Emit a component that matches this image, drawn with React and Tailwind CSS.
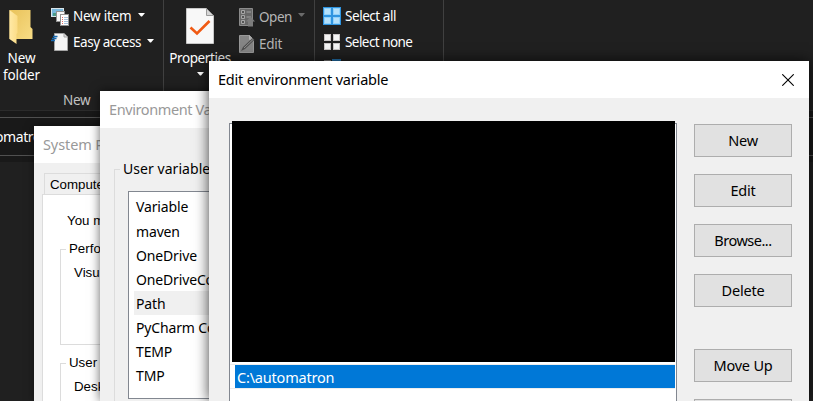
import React from "react";

const UI = "font-['Noto_Sans','Open_Sans',sans-serif]";

function Caret({ className = "" }) {
  return (
    <svg className={`shrink-0 ${className}`} width="7" height="4" viewBox="0 0 7 4" fill="currentColor">
      <path d="M0 0H7L4 3.4H3Z" />
    </svg>
  );
}

function FolderIcon() {
  return (
    <svg width="26" height="36" viewBox="0 0 26 36">
      <defs>
        <linearGradient id="folderBack" x1="0" x2="1" y1="0" y2="1">
          <stop offset="0" stopColor="#e9c25a" />
          <stop offset="1" stopColor="#f7dc85" />
        </linearGradient>
        <linearGradient id="folderFront" x1="0" x2="1">
          <stop offset="0" stopColor="#ffe9a6" />
          <stop offset="1" stopColor="#fbdc86" />
        </linearGradient>
      </defs>
      <path d="M0.500 1H21.500V18L23.500 20V30H0.500Z" fill="url(#folderBack)" />
      <path d="M0.500 1L8.500 7V24L7.500 25V35L0.500 30Z" fill="url(#folderFront)" />
    </svg>
  );
}

function NewItemIcon() {
  return (
    <svg width="19" height="18" viewBox="0 0 19 18" shapeRendering="crispEdges">
      <rect x="0.5" y="0.5" width="12" height="8" fill="#78b7dc" stroke="#d9e5ea" />
      <rect x="2" y="5" width="5" height="3" fill="#4c9a86" />
      <rect x="5.5" y="3.5" width="8" height="10" fill="#f7f7f7" stroke="#929292" />
      <rect x="9.5" y="6.5" width="8" height="11" fill="#fff" stroke="#929292" />
      <path d="M11 9.5H12M11 11.5H12M11 13.5H12M11 15.5H12" stroke="#e06b63" />
      <path d="M13 9.5H17M13 11.5H17M13 13.5H17M13 15.5H17" stroke="#a9c4dc" />
    </svg>
  );
}

function EasyAccessIcon() {
  return (
    <svg width="19" height="19" viewBox="0 0 19 19">
      <path d="M3.500 .5H13L16.500 4V17.500H3.500Z" fill="#f5f5f5" stroke="#a5a5a5" />
      <path d="M13 .5V4H16.500" fill="#ddd" stroke="#a5a5a5" />
      <path d="M2 3.500H6.500M1 5.500H5.500M0 7.500H4" stroke="#1769b0" strokeWidth="1.300" />
    </svg>
  );
}

function PropertiesIcon() {
  return (
    <svg width="28" height="36" viewBox="0 0 28 36">
      <path d="M.5 .5H20.500L27.500 7.500V35.500H.5Z" fill="#f8f8f8" stroke="#c8c8c8" />
      <path d="M20.500 .5V7.500H27.500Z" fill="#d6d6d6" stroke="#999" />
      <path d="M4.500 19.500L11 25.500L23.500 13" fill="none" stroke="#f05a14" strokeWidth="2.600" />
    </svg>
  );
}

function OpenIcon() {
  return (
    <svg width="16" height="19" viewBox="0 0 16 19">
      <path d="M.5 .5H13.500V17.500H.5Z" fill="#686868" stroke="#8b8b8b" />
      <path d="M2.500 2.500H5.500V5.500H2.500ZM2.500 7.500H5.500V10.500H2.500ZM2.500 12.500H5.500V15.500H2.500Z" fill="#555" stroke="#a6a6a6" />
      <path d="M7.500 4H12M7.500 9H12" stroke="#a0a0a0" />
      <path d="M11.500 8.500L16 13.500H14V18.500H9V13.500H7Z" fill="#7c7c7c" />
    </svg>
  );
}

function EditIcon() {
  return (
    <svg width="16" height="18" viewBox="0 0 16 18">
      <path d="M.5 .5H10.500L14.500 4.500V17.500H.5Z" fill="#858585" stroke="#989898" />
      <path d="M10.500 .5V4.500H14.500" fill="#aaa" stroke="#b3b3b3" />
      <path d="M2 16L4 12L13.500 3L15.500 5L6 14Z" fill="#4e4e4e" />
      <path d="M5 13L14 4.500" stroke="#929292" />
    </svg>
  );
}

function TilesIcon({ all }) {
  return (
    <svg width="18" height="18" viewBox="0 0 18 18" shapeRendering="crispEdges">
      {all && <rect width="18" height="18" fill="#2f94e0" />}
      {[1, 10].map((x) =>
        [1, 10].map((y) => (
          <rect key={`${x}-${y}`} x={x + 0.5} y={y + 0.5} width="6" height="6"
            fill={all ? "#b3e0fb" : "#f5f5f5"} stroke={all ? "#8fd0fa" : "#c9c5c5"} />
        ))
      )}
    </svg>
  );
}

function InvertSelectionIcon() {
  return (
    <svg width="18" height="18" viewBox="0 0 18 18" shapeRendering="crispEdges">
      <path d="M1 1H8V8H1ZM10 10H17V17H10Z" fill="#7d7d7d" />
      <path d="M9 0H18V9H9ZM0 9H9V18H0Z" fill="#2577b5" />
    </svg>
  );
}

function Ribbon() {
  return (
    <div className="flex h-[111px] border-b border-[#2b2b2b] bg-[#202020] text-[13.5px] leading-[17px] text-white">
      <div className="flex h-full w-[164px] shrink-0 flex-col border-r border-[#404040]">
        <div className="flex h-[92px]">
          <div className="flex w-[43px] flex-col items-center pt-[9px] text-center">
            <FolderIcon />
            <span className="mt-[5px] tracking-[-0.1px]">New<br />folder</span>
          </div>
          <div className="flex flex-col gap-[7px] pl-2 pt-[7px]">
            <div className="flex h-[19px] items-center">
              <NewItemIcon />
              <span className="ml-[3px] tracking-[-0.25px]">New item</span>
              <Caret className="ml-[7px] -mt-1" />
            </div>
            <div className="flex h-[19px] items-center">
              <EasyAccessIcon />
              <span className="ml-[3px] tracking-[-0.45px]">Easy access</span>
              <Caret className="ml-[6px] -mt-1" />
            </div>
          </div>
        </div>
        <span className="pl-[63px] tracking-[-0.3px] text-[#c3c3c3]">New</span>
      </div>
      <div className="flex w-[151px] shrink-0 border-r border-[#404040]">
        <div className="flex w-[72px] flex-col items-center pt-[8px]">
          <PropertiesIcon />
          <span className="mt-[6px] tracking-[-0.4px]">Properties</span>
          <Caret className="mt-[5px]" />
        </div>
        <div className="flex flex-col gap-[9px] pl-[3px] pt-[8px] text-[#b5b5b5]">
          <div className="flex h-[18px] items-center">
            <OpenIcon />
            <span className="ml-1 tracking-[-0.45px]">Open</span>
            <Caret className="ml-[6px] -mt-1 text-[#6b6b6b]" />
          </div>
          <div className="flex h-[18px] items-center">
            <EditIcon />
            <span className="ml-1 tracking-[-0.3px]">Edit</span>
          </div>
        </div>
      </div>
      <div className="flex w-[129px] shrink-0 flex-col gap-2 border-r border-[#404040] pl-2 pt-[7px]">
        <div className="flex h-[18px] items-center gap-1">
          <TilesIcon all />
          <span className="tracking-[-0.45px]">Select all</span>
        </div>
        <div className="flex h-[18px] items-center gap-1">
          <TilesIcon />
          <span className="tracking-[-0.55px]">Select none</span>
        </div>
        <div className="flex h-[18px] items-center">
          <InvertSelectionIcon />
        </div>
      </div>
    </div>
  );
}

function Explorer() {
  return (
    <div className="h-full bg-[#202020]">
      <Ribbon />
      <div className="h-[51px] bg-[#191919] pt-[6px]">
        <div className="flex h-[39px] items-center overflow-hidden border-y border-[#505050] text-[14px] text-white">
          <span className="-ml-[5px] tracking-[-0.4px]">omatron</span>
        </div>
      </div>
    </div>
  );
}

function GroupBox({ title, className, children }) {
  return (
    <fieldset className={`border border-r-0 border-[#dcdcdc] ${className}`}>
      <legend className="ml-[5px] px-[3px] leading-[16px]">{title}</legend>
      {children}
    </fieldset>
  );
}

function SystemProperties() {
  return (
    <section className="absolute left-[34px] top-[126px] flex h-[275px] w-[300px] flex-col overflow-hidden bg-[#f0f0f0] font-['Liberation_Sans',Arial,sans-serif] text-[13.3px] text-black shadow-[0_0_8px_rgba(0,0,0,0.5)]">
      <header className={`flex h-[37px] shrink-0 items-center bg-white pl-[9px] text-[14.5px] tracking-[-0.1px] text-[#999] ${UI}`}>
        System Properties
      </header>
      <div className="ml-[10px] mt-[10px] flex h-[21px] w-[120px] items-center border border-b-0 border-[#dcdcdc] pl-[5px] pt-[2px]">
        Computer
      </div>
      <div className="ml-2 flex grow flex-col border-l border-t border-[#dcdcdc] bg-white pl-[17px]">
        <p className="mt-[18px] whitespace-nowrap pl-[7px] leading-[16px]">You must</p>
        <GroupBox title="Performance" className="mt-[12px] h-[104px] shrink-0">
          <p className="mt-[8px] pl-[13px] leading-[16px]">Visual</p>
        </GroupBox>
        <GroupBox title="User Profiles" className="mt-[10px] h-[80px] shrink-0">
          <p className="mt-[8px] pl-[13px] leading-[16px]">Desktop</p>
        </GroupBox>
      </div>
    </section>
  );
}

const VARIABLES = ["maven", "OneDrive", "OneDriveCommercial", "Path", "PyCharm Community", "TEMP", "TMP"];

function EnvironmentVariables() {
  return (
    <section className="absolute left-[100px] top-[91px] flex h-[310px] w-[400px] flex-col overflow-hidden bg-[#f0f0f0] text-[14px] tracking-[-0.15px] text-black shadow-[0_0_10px_rgba(0,0,0,0.6)]">
      <header className="flex h-[37px] shrink-0 items-center bg-white pl-[9px] text-[14.5px] tracking-[-0.4px] text-[#999]">
        Environment Variables
      </header>
      <fieldset className="ml-[14px] mt-[31px] h-[260px] shrink-0 border border-[#dcdcdc]">
        <legend className="ml-[5px] px-[3px] leading-[20px] tracking-[0.05px]">User variables</legend>
        <div className="ml-[13px] mt-[12px] h-[208px] border border-[#828790] bg-white pl-[5px]">
          <div className="flex h-[27px] items-center pl-[2px] pt-[1px]">Variable</div>
          {VARIABLES.map((name) => (
            <div key={name} className={`flex h-6 items-center pl-[2px] ${name === "Path" ? "bg-[#f0f0f0]" : ""}`}>
              {name}
            </div>
          ))}
        </div>
      </fieldset>
    </section>
  );
}

function DialogButton({ children, className = "" }) {
  return (
    <button className={`flex h-[33px] w-[98px] shrink-0 items-center justify-center border border-[#adadad] bg-[#e1e1e1] ${className}`}>
      {children}
    </button>
  );
}

function EditVariable() {
  return (
    <section className="absolute left-[209px] top-[61px] flex h-[340px] w-[600px] flex-col overflow-hidden bg-[#f0f0f0] text-[14.5px] tracking-[-0.2px] text-black shadow-[0_0_13px_rgba(0,0,0,0.75)]">
      <header className="flex h-[37px] shrink-0 items-center justify-between bg-white pl-[9px] pr-[15px]">
        <span>Edit environment variable</span>
        <svg width="12" height="12" viewBox="0 0 12 12" stroke="#000" strokeWidth="1.1">
          <path d="M.3 .3L11.700 11.700M11.700 .3L.3 11.700" />
        </svg>
      </header>
      <div className="flex pl-5 pt-[25px]">
        <div className="relative h-[300px] w-[448px] border border-[#828790] bg-white pt-[240px]">
          <div className="absolute -top-[3px] left-[2px] h-[241px] w-[443px] bg-black" />
          <div className="mr-px border-y border-[#ededed] pl-[5px]">
            <div className="flex h-[23px] items-center bg-[#0078d7] pl-[2px] pt-[2px] text-white">C:\automatron</div>
          </div>
        </div>
        <div className="ml-[17px] mt-px flex flex-col gap-[17px]">
          <DialogButton>New</DialogButton>
          <DialogButton>Edit</DialogButton>
          <DialogButton className="tracking-[-0.5px]">Browse...</DialogButton>
          <DialogButton>Delete</DialogButton>
          <DialogButton className="mt-[25px]">Move Up</DialogButton>
          <DialogButton />
        </div>
      </div>
    </section>
  );
}

export default function App() {
  return (
    <main className={`relative h-[401px] w-[813px] overflow-hidden ${UI}`}>
      <Explorer />
      <SystemProperties />
      <EnvironmentVariables />
      <EditVariable />
    </main>
  );
}
